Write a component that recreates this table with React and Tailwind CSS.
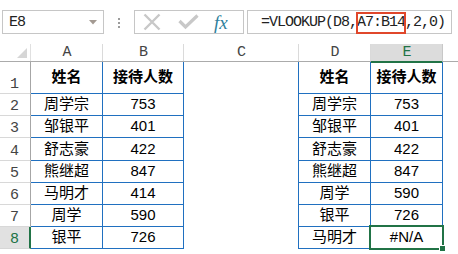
import React from "react";

const MONO = "[font-family:'Liberation_Mono',monospace] text-[15px] tracking-[-1px]";
const CELL = "[font-family:'Liberation_Sans','Noto_Sans_CJK_SC',sans-serif] text-[15px] text-black";
const BLUE = "border-[#2070c0]";

const COLS = [
  { key: "A", w: "w-[72px]" },
  { key: "B", w: "w-[81px]" },
  { key: "C", w: "w-[115px]" },
  { key: "D", w: "w-[72px]" },
  { key: "E", w: "w-[72px]" },
];

const ROWS = [
  { n: 1, h: "h-[32px]", a: "姓名", b: "接待人数", d: "姓名", e: "接待人数", head: true },
  { n: 2, h: "h-[22px]", a: "周学宗", b: "753", d: "周学宗", e: "753" },
  { n: 3, h: "h-[22px]", a: "邹银平", b: "401", d: "邹银平", e: "401" },
  { n: 4, h: "h-[23px]", a: "舒志豪", b: "422", d: "舒志豪", e: "422" },
  { n: 5, h: "h-[22px]", a: "熊继超", b: "847", d: "熊继超", e: "847" },
  { n: 6, h: "h-[22px]", a: "马明才", b: "414", d: "周学", e: "590" },
  { n: 7, h: "h-[22px]", a: "周学", b: "590", d: "银平", e: "726" },
  { n: 8, h: "h-[22px]", a: "银平", b: "726", d: "马明才", e: "#N/A", active: true },
];

function FormulaBar() {
  return (
    <div className="flex items-start h-[44px] pt-[10px]">
      {/* name box */}
      <div className="ml-[2px] w-[102px] h-[24px] border border-[#c6c6c6] flex items-center justify-between pl-[6px] pr-[6px]">
        <span className={`${MONO} text-[#222] leading-none`}>E8</span>
        <svg width="8" height="5" viewBox="0 0 8 5">
          <path d="M0 0 H8 L4 4.5 Z" fill="#a39a92" />
        </svg>
      </div>
      {/* grip dots */}
      <div className="w-[30px] flex flex-col items-center gap-[2px] pt-[8px]">
        <div className="w-[2px] h-[2px] bg-[#9c9c9c]" />
        <div className="w-[2px] h-[2px] bg-[#9c9c9c]" />
        <div className="w-[2px] h-[2px] bg-[#9c9c9c]" />
      </div>
      {/* cancel / enter / insert function */}
      <div className="w-[110px] h-[24px] border border-[#c6c6c6] flex items-center pl-[8px]">
        <svg width="18" height="18" viewBox="0 0 18 18">
          <path d="M1.5 1.5 L16.5 16.5 M16.5 1.5 L1.5 16.5" stroke="#c8c8c8" strokeWidth="2.4" />
        </svg>
        <svg className="ml-[17px]" width="21" height="16" viewBox="0 0 21 16">
          <path d="M1.5 7 L7.5 13 L19.5 1.5" stroke="#c8c8c8" strokeWidth="3.2" fill="none" />
        </svg>
        <span className="ml-[15px] [font-family:'Liberation_Serif',serif] italic text-[19px] text-[#2f7f9c] leading-none">
          fx
        </span>
      </div>
      {/* formula input */}
      <div className="relative ml-[3px] w-[205px] h-[24px] border border-[#c6c6c6] flex items-center pl-[13px]">
        <span className={`${MONO} text-[#222] leading-none whitespace-pre`}>=VLOOKUP(D8,A7:B14,2,0)</span>
        {/* range reference highlight */}
        <span className="absolute left-[108px] top-[1px] w-[50px] h-[22px] border-2 border-[#e0472b]" />
      </div>
    </div>
  );
}

function HeaderRow() {
  return (
    <div className="flex h-[18px] border-b border-[#ababab]">
      <div className="w-[31px] h-full border-r border-[#e0e0e0] relative">
        <svg className="absolute left-[17px] top-[4px]" width="10" height="10" viewBox="0 0 10 10">
          <path d="M10 0 V10 H0 Z" fill="#d6d6d6" />
        </svg>
      </div>
      {COLS.map((c) =>
        c.key === "E" ? (
          <div
            key={c.key}
            className={`${c.w} h-[19px] -mb-[1px] bg-[#dcdcdc] border-r border-[#c8c8c8] border-b-2 border-b-[#217346] flex items-start justify-center pt-[2px]`}
          >
            <span className={`${MONO} text-[#217346] leading-[13px]`}>E</span>
          </div>
        ) : (
          <div
            key={c.key}
            className={`${c.w} h-full border-r border-[#dadada] flex items-start justify-center pt-[2px]`}
          >
            <span className={`${MONO} text-[#444] leading-[13px]`}>{c.key}</span>
          </div>
        )
      )}
      <div className="flex-1" />
    </div>
  );
}

function DataRow({ r }) {
  const weight = r.head ? "font-bold" : "";
  const box = `h-full border-r border-b ${BLUE} flex items-center justify-center ${CELL} ${weight}`;
  return (
    <div className={`flex ${r.h}`}>
      <div
        className={
          r.active
            ? "w-[31px] h-full bg-[#e1e1e1] border-r-2 border-[#217346] border-b border-b-[#d6d6d6] flex items-end pl-[10px] pb-[1px]"
            : "w-[31px] h-full border-r border-[#a6a6a6] border-b border-b-[#d8d8d8] flex items-end pl-[10px] pb-[1px]"
        }
      >
        <span className={`${MONO} leading-[14px] ${r.active ? "text-[#217346]" : "text-[#444]"}`}>{r.n}</span>
      </div>
      <div className={`w-[72px] ${box}`}>{r.a}</div>
      <div className={`w-[81px] ${box}`}>{r.b}</div>
      <div className={`w-[115px] h-full border-r ${BLUE}`} />
      <div className={`w-[72px] ${box}`}>{r.d}</div>
      <div className={`w-[72px] ${box}`}>{r.e}</div>
      <div className="flex-1" />
    </div>
  );
}

export default function App() {
  return (
    <div className="w-[458px] h-[254px] bg-white overflow-hidden relative">
      <FormulaBar />
      <HeaderRow />
      {ROWS.map((r) => (
        <DataRow key={r.n} r={r} />
      ))}
      {/* active cell frame and fill handle */}
      <div className="absolute left-[369px] top-[225px] w-[75px] h-[25px] border-2 border-[#217346]" />
      <div className="absolute left-[439px] top-[245px] w-[7px] h-[7px] bg-[#217346] border border-white" />
    </div>
  );
}
